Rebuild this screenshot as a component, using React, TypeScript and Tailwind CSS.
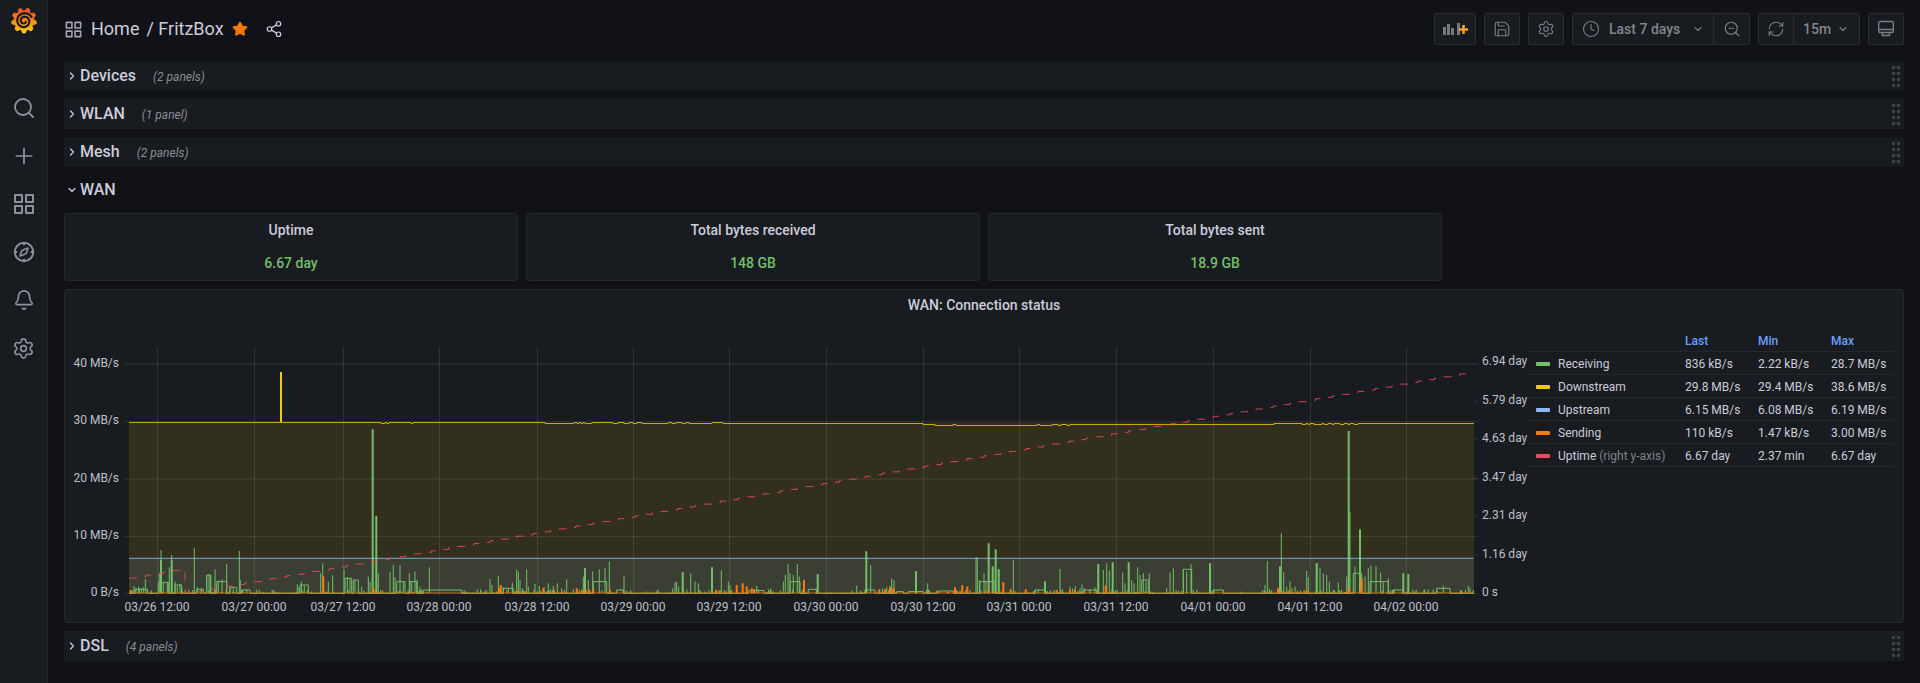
import React from "react";
import { Search, Plus, Bell, Settings, Save, Clock, ZoomOut, RefreshCw, Share2, Star, ChevronRight, ChevronDown } from "lucide-react";

type P = [number, number];
const BASE = 593.3;
const z5 = (x: number) => 60 + x / 3;
const z6 = (x: number) => 560 + x / 3;
const z7 = (x: number) => 1060 + x / 3;

// [zoomX, zoomY] read off the reference
const g5: P[] = [[222,738],[228,745],[236,740],[244,745],[250,742],[256,718],[262,748],[298,700],[303,630],[310,727],[322,727],[328,682],[335,645],[345,725],[352,738],[360,732],[365,745],[403,625],[398,750],[412,742],[424,745],[440,705],[447,703],[452,705],[465,688],[475,722],[486,718],[500,672],[510,740],[520,745],[538,633],[541,720],[548,750],[560,748],[598,750],[643,756],[712,733],[717,742],[724,725],[733,738],[742,750],[782,700],[788,670],[805,725],[818,706],[852,688],[862,712],[870,716],[885,720],[905,740],[925,710],[930,725],[955,700],[950,712],[962,750],[990,695],[1000,675],[1005,712],[1020,675],[1030,725],[1048,700],[1055,725],[1065,695],[1072,720],[1080,740],[1108,682],[1218,755],[1252,748],[1262,748],[1290,717],[1296,735],[1315,708],[1322,735],[1330,742],[1345,745],[1357,728],[1370,688],[1375,695],[1380,720],[1388,745],[1400,688],[1405,740],[1425,732],[1438,738],[1452,742],[1465,730],[1480,738],[1492,730]];
const gT5: P[] = [[938,268],[949,528],[303,660],[335,660]];
const g6: P[] = [[5,565],[20,538],[40,568],[50,566],[58,570],[70,530],[75,505],[85,540],[98,515],[118,508],[135,505],[148,484],[192,527],[200,572],[270,575],[295,575],[338,565],[345,547],[350,545],[356,560],[368,517],[392,520],[405,545],[415,550],[420,570],[435,574],[456,502],[470,570],[484,511],[505,545],[510,555],[515,570],[590,558],[632,565],[640,575],[670,545],[676,525],[684,493],[690,520],[700,525],[712,492],[718,530],[728,570],[773,523],[812,577],[850,577],[890,557],[932,495],[958,574],[968,565],[980,560],[985,570],[995,535],[1002,540],[1068,514],[1103,550],[1108,570],[1190,570],[1200,570],[1230,570],[1248,472],[1252,472],[1258,540],[1272,520],[1278,545],[1298,500],[1316,508],[1330,570],[1360,480],[1435,568],[1455,544],[1470,575]];
const gT6: P[] = [[919,454],[1286,430],[1307,448],[1068,514],[456,502],[368,517],[75,505],[1455,544],[773,523],[1298,500],[1316,508]];
const g7: P[] = [[0,507],[30,560],[38,565],[46,558],[60,565],[66,553],[74,565],[90,568],[105,562],[115,492],[130,510],[140,490],[148,512],[165,575],[172,570],[188,518],[195,550],[215,540],[222,550],[233,502],[240,525],[250,520],[258,545],[268,520],[272,575],[320,565],[330,518],[340,505],[348,570],[370,508],[380,515],[393,492],[400,570],[543,575],[608,570],[615,555],[622,484],[628,565],[635,570],[664,400],[671,517],[680,560],[690,545],[696,565],[705,560],[712,572],[740,513],[745,532],[770,490],[780,505],[790,520],[800,525],[808,545],[820,570],[835,548],[845,570],[860,530],[870,335],[885,500],[915,530],[925,505],[933,497],[948,498],[962,518],[970,548],[985,535],[992,570],[1065,575],[1092,570],[1132,572],[1150,558],[1205,570],[1225,558],[1230,565],[1240,570]];
const gT7: P[] = [[866,93],[900,388],[660,500],[450,490],[115,492],[158,487],[206,487],[1030,520],[1045,523],[770,490]];

const o5: P[] = [[212,750],[790,710],[790,745],[940,745],[1322,735],[1318,745],[1375,752],[1450,745],[1482,752],[1395,754],[305,757],[485,757],[950,755],[1060,756]];
const o6: P[] = [[6,575],[50,565],[70,570],[78,571],[88,570],[100,568],[150,570],[468,570],[478,572],[510,572],[530,555],[548,550],[560,560],[575,565],[582,568],[732,540],[958,568],[975,568],[990,560],[1000,565],[1135,574],[1165,575],[1185,562],[1192,575],[1207,555],[1222,560],[1285,572],[1318,572],[1330,547],[1352,568],[1397,568],[1490,570]];
const o7: P[] = [[30,570],[45,570],[137,557],[150,577],[190,577],[232,577],[654,565],[660,575],[688,572],[712,576],[733,572],[744,573],[790,577],[855,576],[866,565],[905,535],[903,572],[1206,577]];

const h5 = (l: P[]) => l.map(([x, y]) => [z5(x), (760 - y) / 3] as P);
const h6 = (l: P[]) => l.map(([x, y]) => [z6(x), (580 - y) / 3] as P);
const h7 = (l: P[]) => l.map(([x, y]) => [z7(x), (580 - y) / 3] as P);

const spikesPath = (l: P[]) => l.map(([x, h]) => `M${x.toFixed(1)} ${BASE}V${(BASE - h).toFixed(1)}`).join("");
const greenThin = spikesPath([...h5(g5), ...h6(g6), ...h7(g7)]);
const greenThick = spikesPath([...h5(gT5), ...h6(gT6), ...h7(gT7)]);
const orangeBars = spikesPath([...h5(o5), ...h6(o6), ...h7(o7)]);

// plateaus: [zoom x1, zoom x2, zoom y]
const pl5: [number, number, number][] = [[225,262,748],[295,325,727],[345,365,735],[410,430,748],[440,452,705],[470,500,725],[510,530,742],[545,570,750],[720,745,735],[855,875,715],[880,895,720],[1010,1035,725],[1050,1070,725],[1090,1205,750],[1330,1360,745]];
const pl6: [number, number, number][] = [[100,140,545],[170,190,570],[565,612,572],[690,720,545],[745,770,568],[915,945,570],[1010,1030,575],[1045,1090,575],[1130,1180,573],[1260,1305,545],[1425,1455,570]];
const pl7: [number, number, number][] = [[70,110,570],[245,265,540],[370,395,508],[460,490,570],[880,905,520],[930,985,545],[1000,1030,570],[1130,1170,565]];

function buildGreenBase() {
  const all: [number, number, number][] = [
    ...pl5.map(([a, b, y]) => [z5(a), z5(b), (760 - y) / 3] as [number, number, number]),
    ...pl6.map(([a, b, y]) => [z6(a), z6(b), (580 - y) / 3] as [number, number, number]),
    ...pl7.map(([a, b, y]) => [z7(a), z7(b), (580 - y) / 3] as [number, number, number]),
  ].sort((p, q) => p[0] - q[0]);
  let d = `M129 ${BASE}`;
  for (const [a, b, h] of all) {
    const y = (BASE - h).toFixed(1);
    d += `H${a.toFixed(1)}V${y}H${b.toFixed(1)}V${BASE}`;
  }
  return d + `H1474`;
}
const greenBase = buildGreenBase();

function buildYellow() {
  let seed = 17;
  const rnd = () => (seed = (seed * 1103 + 12345) % 65536) / 65536;
  const notches: [number, number][] = [[382,385],[388,389],[411,413],[545,547],[549,550],[553,554],[556,558]];
  const dips = [1303, 1308, 1315, 1319, 1325, 1332, 1341, 1348, 1355];
  let d = "";
  let x = 129;
  while (x < 1474) {
    let y = 422.5;
    let w = 2;
    if (x < 545) {
      y = notches.some(([a, b]) => x >= a - 1 && x < b) ? 423.5 : 422.5;
    } else if (x < 723) {
      y = rnd() < 0.35 ? 422.5 : 423.5;
      w = 2 + Math.floor(rnd() * 4);
    } else if (x < 917) {
      y = 423.5;
      w = 8;
    } else if (x < 933) {
      y = 424.5;
      w = 4;
    } else if (x < 1273) {
      y = x > 1060 ? 424.5 : rnd() < 0.15 ? 424.5 : 425.5;
      if (Math.abs(x - 1067) < 2) y = 425.5;
      w = 3;
    } else {
      y = dips.some((b) => Math.abs(b - x) < 1.5) ? 424.5 : 423.5;
      w = 2;
    }
    d += d ? `H${x}V${y}` : `M${x} ${y}`;
    x += w;
  }
  return d + "H1474";
}
const yellowLine = buildYellow();

function buildRed() {
  let d = "M129 578";
  const step = 8.5;
  for (let x = 129 + step; x <= 185; x += step) {
    d += `H${x}V${(578 - 0.172 * (x - 129)).toFixed(1)}`;
  }
  d += `H185V${BASE}`;
  for (let x = 185 + step; x <= 1474; x += step) {
    d += `H${x}V${(BASE - 0.1721 * (x - 185)).toFixed(1)}`;
  }
  return d;
}
const redLine = buildRed();

function buildNoise() {
  const pts = [...h5(g5), ...h6(g6), ...h7(g7), ...h5(gT5), ...h6(gT6), ...h7(gT7)].map((p) => p[0]);
  let seed = 91;
  const rnd = () => (seed = (seed * 1103 + 12345) % 65536) / 65536;
  let d = "";
  for (let x = 131; x < 1474; x += 1.7) {
    if (pts.some((p) => Math.abs(p - x) < 5) && rnd() < 0.3) {
      d += `M${x.toFixed(1)} ${BASE}V${(BASE - 1 - rnd() * 3).toFixed(1)}`;
    }
  }
  return d;
}
const greenNoise = buildNoise();

function logoGear() {
  const teeth = 9;
  let d = "";
  for (let i = 0; i < teeth; i++) {
    const a = -Math.PI / 2 + 0.35 + (i * 2 * Math.PI) / teeth;
    const w = (Math.PI / teeth) * 0.45;
    const pts: [number, number][] = [
      [9.6, a - w * 2],
      [12.6, a - w * 0.6],
      [12.6, a + w * 0.6],
      [9.6, a + w * 2],
    ];
    for (const [r, t] of pts) {
      const x = 13 + r * Math.cos(t);
      const y = 13.5 + r * Math.sin(t);
      d += `${d ? "L" : "M"}${x.toFixed(2)} ${y.toFixed(2)}`;
    }
  }
  return d + "Z";
}
function logoSpiral() {
  let d = "";
  const turns = 1.85;
  const n = 48;
  for (let i = 0; i <= n; i++) {
    const f = i / n;
    const t = -0.5 - f * turns * 2 * Math.PI;
    const r = 8.4 - f * 6.6;
    const x = 13.2 + r * Math.cos(t);
    const y = 14 + r * Math.sin(t);
    d += `${i ? "L" : "M"}${x.toFixed(2)} ${y.toFixed(2)}`;
  }
  return d;
}
const gearPath = logoGear();
const spiralPath = logoSpiral();

function Logo() {
  return (
    <svg width="26" height="27" viewBox="0 0 26 27">
      <defs>
        <linearGradient id="logog" x1="0" y1="0" x2="0" y2="1">
          <stop offset="0" stopColor="#F0502A" />
          <stop offset="0.5" stopColor="#FF8A14" />
          <stop offset="1" stopColor="#FFD00C" />
        </linearGradient>
      </defs>
      <path d={gearPath} fill="url(#logog)" stroke="url(#logog)" strokeWidth="0.8" strokeLinejoin="round" />
      <path d={spiralPath} fill="none" stroke="#181b1f" strokeWidth="2.2" strokeLinecap="round" />
    </svg>
  );
}

const hGrid = [364, 421.6, 479, 536.6];
const vTicks: [number, string][] = [
  [157, "03/26 12:00"],[254, "03/27 00:00"],[343, "03/27 12:00"],[439, "03/28 00:00"],[537, "03/28 12:00"],[633, "03/29 00:00"],[729, "03/29 12:00"],[826, "03/30 00:00"],[923, "03/30 12:00"],[1019, "03/31 00:00"],[1116, "03/31 12:00"],[1213, "04/01 00:00"],[1310, "04/01 12:00"],[1406, "04/02 00:00"],
];
const leftTicks: [number, string][] = [[362.7, "40 MB/s"],[419.7, "30 MB/s"],[477.7, "20 MB/s"],[535, "10 MB/s"],[591.7, "0 B/s"]];
const rightTicks: [number, string][] = [[360.7, "6.94 day"],[400, "5.79 day"],[438, "4.63 day"],[476.7, "3.47 day"],[514.7, "2.31 day"],[553.7, "1.16 day"],[591.7, "0 s"]];

const AXIS = "#bfc0cc";

function Chart() {
  return (
    <svg viewBox="65 320 1463 302" className="block w-[1463px] h-[302px] shrink-0">
      {hGrid.map((y) => (
        <line key={y} x1="124" x2="1478" y1={y} y2={y} stroke="#ccccdc" strokeOpacity="0.13" />
      ))}
      {[401.5, 439, 478.5, 516, 555].map((y) => (
        <line key={y} x1="1474" x2="1478" y1={y} y2={y} stroke="#ccccdc" strokeOpacity="0.13" />
      ))}
      <line x1="124" x2="1478" y1="593.5" y2="593.5" stroke="#ccccdc" strokeOpacity="0.13" />
      {vTicks.map(([x]) => (
        <line key={x} x1={x + 0.5} x2={x + 0.5} y1="347" y2="597" stroke="#ccccdc" strokeOpacity="0.13" />
      ))}
      <path d={`M129 422.6H1474V${BASE}H129Z`} fill="#F2CC0C" fillOpacity="0.12" />
      <path d={`M129 558.3H1474V${BASE}H129Z`} fill="#8AB8FF" fillOpacity="0.1" />
      <path d={greenBase} fill="none" stroke="#73BF69" strokeWidth="1" />
      <path d={greenNoise} fill="none" stroke="#73BF69" strokeWidth="1" />
      <path d={greenThin} fill="none" stroke="#73BF69" strokeWidth="1" />
      <path d={greenThick} fill="none" stroke="#73BF69" strokeWidth="2" />
      <path d={yellowLine} fill="none" stroke="#c9aa0e" strokeWidth="1" />
      <rect x="280" y="372" width="2" height="50" fill="#F2CC0C" />
      <line x1="129" x2="1474" y1="558.3" y2="558.3" stroke="#8AB8FF" strokeOpacity="0.85" strokeWidth="1" />
      <path d={orangeBars} fill="none" stroke="#FF780A" strokeWidth="2" />
      <line x1="129" x2="1474" y1="593" y2="593" stroke="#FF780A" strokeOpacity="0.7" strokeWidth="1" />
      <path d={redLine} fill="none" stroke="#F2495C" strokeOpacity="0.85" strokeWidth="1" strokeDasharray="8 9" />
      {leftTicks.map(([y, t]) => (
        <text key={t} x="119" y={y + 4.3} textAnchor="end" fontSize="12" fill={AXIS}>{t}</text>
      ))}
      {rightTicks.map(([y, t]) => (
        <text key={t} x="1482" y={y + 4.3} fontSize="12" fill={AXIS}>{t}</text>
      ))}
      {vTicks.map(([x, t]) => (
        <text key={t} x={x} y="611" textAnchor="middle" fontSize="12" fill={AXIS}>{t}</text>
      ))}
    </svg>
  );
}

const legend = [
  { c: "bg-[#73BF69]", n: "Receiving", a: "836 kB/s", b: "2.22 kB/s", d: "28.7 MB/s" },
  { c: "bg-[#F2CC0C]", n: "Downstream", a: "29.8 MB/s", b: "29.4 MB/s", d: "38.6 MB/s" },
  { c: "bg-[#8AB8FF]", n: "Upstream", a: "6.15 MB/s", b: "6.08 MB/s", d: "6.19 MB/s" },
  { c: "bg-[#FF780A]", n: "Sending", a: "110 kB/s", b: "1.47 kB/s", d: "3.00 MB/s" },
  { c: "bg-[#F2495C]", n: "Uptime", s: " (right y-axis)", a: "6.67 day", b: "2.37 min", d: "6.67 day" },
];

function Legend() {
  return (
    <div className="w-[367px] pt-[9px] text-xs text-[#ccccdc]">
      <div className="grid grid-cols-[157px_73px_73px_64px] h-[23px] pt-px items-center border-b border-[#24272b] font-medium text-[#6E9FFF]">
        <span />
        <span>Last</span>
        <span>Min</span>
        <span>Max</span>
      </div>
      {legend.map((r) => (
        <div key={r.n} className="grid grid-cols-[157px_73px_73px_64px] h-[23px] pt-px items-center border-b border-[#24272b]">
          <span className="flex items-center">
            <span className={`ml-2 mr-2 w-[14px] h-1 rounded-[1px] ${r.c}`} />
            <span>{r.n}<span className="text-[#7f808a]">{r.s}</span></span>
          </span>
          <span>{r.a}</span>
          <span>{r.b}</span>
          <span className="whitespace-nowrap">{r.d}</span>
        </div>
      ))}
    </div>
  );
}

function AppsIcon({ size }: { size: number }) {
  return (
    <svg width={size} height={size} viewBox="0 0 24 24" fill="currentColor">
      <path d="M10,13H3a1,1,0,0,0-1,1v7a1,1,0,0,0,1,1h7a1,1,0,0,0,1-1V14A1,1,0,0,0,10,13ZM9,20H4V15H9ZM21,2H14a1,1,0,0,0-1,1v7a1,1,0,0,0,1,1h7a1,1,0,0,0,1-1V3A1,1,0,0,0,21,2ZM20,9H15V4h5Zm1,4H14a1,1,0,0,0-1,1v7a1,1,0,0,0,1,1h7a1,1,0,0,0,1-1V14A1,1,0,0,0,21,13Zm-1,7H15V15h5ZM10,2H3A1,1,0,0,0,2,3v7a1,1,0,0,0,1,1h7a1,1,0,0,0,1-1V3A1,1,0,0,0,10,2ZM9,9H4V4H9Z" />
    </svg>
  );
}

function CompassIcon() {
  return (
    <svg width="24" height="24" viewBox="0 0 24 24" fill="none" stroke="currentColor" strokeWidth="1.9">
      <circle cx="12" cy="12" r="9.2" />
      <path d="M12 3v2.2M12 18.8V21M3 12h2.2M18.8 12H21" />
      <path d="M16 8l-1.600 5.200-2.200 1.200-4.200 1.600 1.600-5 2.200-1.400z" strokeWidth="1.600" strokeLinejoin="round" />
    </svg>
  );
}

function AddPanelIcon() {
  return (
    <svg width="25" height="13" viewBox="0 0 25 13">
      <defs>
        <linearGradient id="addg" x1="0" y1="0" x2="0" y2="1">
          <stop offset="0" stopColor="#F2B33A" />
          <stop offset="1" stopColor="#FF8A14" />
        </linearGradient>
      </defs>
      <g fill="#77797f">
        <rect x="0" y="4" width="3" height="8" />
        <rect x="4" y="1" width="3" height="11" />
        <rect x="8" y="5" width="3" height="7" />
        <rect x="14" y="0" width="3" height="12" />
      </g>
      <path d="M19.200 2h2.600v3.200H25v2.600h-3.200V11h-2.600V7.800H16V5.200h3.200z" fill="url(#addg)" />
    </svg>
  );
}

function TvIcon() {
  return (
    <svg width="18" height="18" viewBox="0 0 18 18" fill="none" stroke="#7b7d84" strokeWidth="1.400">
      <rect x="1.700" y="1.500" width="14.600" height="11" rx="1.500" />
      <path d="M1.700 9.500h14.600M5.500 12.500v3h7v-3" />
    </svg>
  );
}

function Handle() {
  return (
    <div className="grid grid-cols-[3px_3px] gap-x-[2px] gap-y-[3px]">
      {Array.from({ length: 8 }).map((_, i) => (
        <span key={i} className="w-[3px] h-[3px] bg-[#3f4146]" />
      ))}
    </div>
  );
}

function Row({ title, sub }: { title: string; sub: string }) {
  return (
    <div className="flex items-center h-[30px] mb-2 bg-[#181b1f] pl-[2px]">
      <ChevronRight size={12} strokeWidth={2.5} className="text-[#ccccdc]" />
      <span className="ml-[2px] text-base font-medium text-[#ccccdc] leading-none">{title}</span>
      <span className="ml-[17px] pt-[2px] text-xs italic text-[#8b8c97]">{sub}</span>
      <span className="ml-auto mr-1"><Handle /></span>
    </div>
  );
}

function Stat({ title, value }: { title: string; value: string }) {
  return (
    <div className="h-[68px] rounded-[3px] border border-[#24272b] bg-[#181b1f] flex flex-col items-center pt-[7px]">
      <div className="h-[19px] leading-[19px] text-sm font-medium text-[#ccccdc]">{title}</div>
      <div className="mt-[14px] text-sm font-medium leading-[19px] text-[#73BF69]">{value}</div>
    </div>
  );
}

const btn = "h-8 flex items-center justify-center bg-[#181b1f] border border-[#2a2c31] rounded-[2px] text-[#7b7d84]";

function Toolbar() {
  return (
    <div className="ml-auto flex items-center gap-2">
      <div className={`${btn} w-[42px]`}><AddPanelIcon /></div>
      <div className={`${btn} w-9`}><Save size={18} strokeWidth={1.5} /></div>
      <div className={`${btn} w-9`}><Settings size={18} strokeWidth={1.5} /></div>
      <div className={`${btn} w-[178px]`}>
        <div className="flex items-center flex-1 pl-[9px] h-full border-r border-[#2a2c31]">
          <Clock size={18} strokeWidth={1.5} />
          <span className="ml-[9px] text-sm font-medium text-[#81858f] whitespace-nowrap">Last 7 days</span>
          <ChevronDown size={12} strokeWidth={2.2} className="ml-[12px]" />
        </div>
        <div className="w-[35px] flex justify-center"><ZoomOut size={18} strokeWidth={1.5} /></div>
      </div>
      <div className={`${btn} w-[102px]`}>
        <div className="w-[35px] h-full flex items-center justify-center border-r border-[#2a2c31]"><RefreshCw size={18} strokeWidth={1.5} /></div>
        <div className="flex-1 flex items-center pl-[9px]">
          <span className="text-sm font-medium text-[#81858f]">15m</span>
          <ChevronDown size={12} strokeWidth={2.2} className="ml-[6px]" />
        </div>
      </div>
      <div className={`${btn} w-9`}><TvIcon /></div>
    </div>
  );
}

export default function App() {
  return (
    <div className="flex h-[683px] overflow-hidden bg-[#111217] font-['Roboto',sans-serif]">
      <aside className="w-12 shrink-0 bg-[#181b1f] border-r border-[#22252a] flex flex-col items-center text-[#8f9199]">
        <div className="h-[84px] pt-[7px]">
          <Logo />
        </div>
        {[<Search key="s" size={24} strokeWidth={1.8} />, <Plus key="p" size={26} strokeWidth={1.6} />, <AppsIcon key="a" size={24} />, <CompassIcon key="c" />, <Bell key="b" size={22} strokeWidth={1.8} />, <Settings key="g" size={23} strokeWidth={1.7} />].map((icon, i) => (
          <div key={i} className="h-12 w-full flex items-center justify-center">{icon}</div>
        ))}
      </aside>
      <main className="flex-1 min-w-0 px-4">
        <header className="h-[61px] pb-[3px] flex items-center">
          <span className="text-[#a5a6b0]"><AppsIcon size={19} /></span>
          <span className="ml-2 text-lg text-[#ccccdc]">Home</span>
          <span className="ml-[7px] text-lg text-[#ccccdc]">/ FritzBox</span>
          <Star size={16} className="ml-2 text-[#F2790F]" fill="#F2790F" />
          <Share2 size={18} strokeWidth={1.6} className="ml-[17px] text-[#ccccdc]" />
          <Toolbar />
        </header>
        <Row title="Devices" sub="(2 panels)" />
        <Row title="WLAN" sub="(1 panel)" />
        <Row title="Mesh" sub="(2 panels)" />
        <div className="flex items-center h-[30px] mb-2 pl-[2px]">
          <ChevronDown size={12} strokeWidth={2.5} className="text-[#ccccdc]" />
          <span className="ml-[2px] text-base font-medium text-[#ccccdc] leading-none">WAN</span>
        </div>
        <div className="grid grid-cols-4 gap-2 mb-2">
          <Stat title="Uptime" value="6.67 day" />
          <Stat title="Total bytes received" value="148 GB" />
          <Stat title="Total bytes sent" value="18.9 GB" />
        </div>
        <section className="h-[334px] rounded-[3px] border border-[#24272b] bg-[#181b1f] mb-2">
          <div className="h-[30px] flex items-center justify-center text-sm font-medium text-[#ccccdc]">WAN: Connection status</div>
          <div className="flex">
            <Chart />
            <Legend />
          </div>
        </section>
        <Row title="DSL" sub="(4 panels)" />
      </main>
    </div>
  );
}
